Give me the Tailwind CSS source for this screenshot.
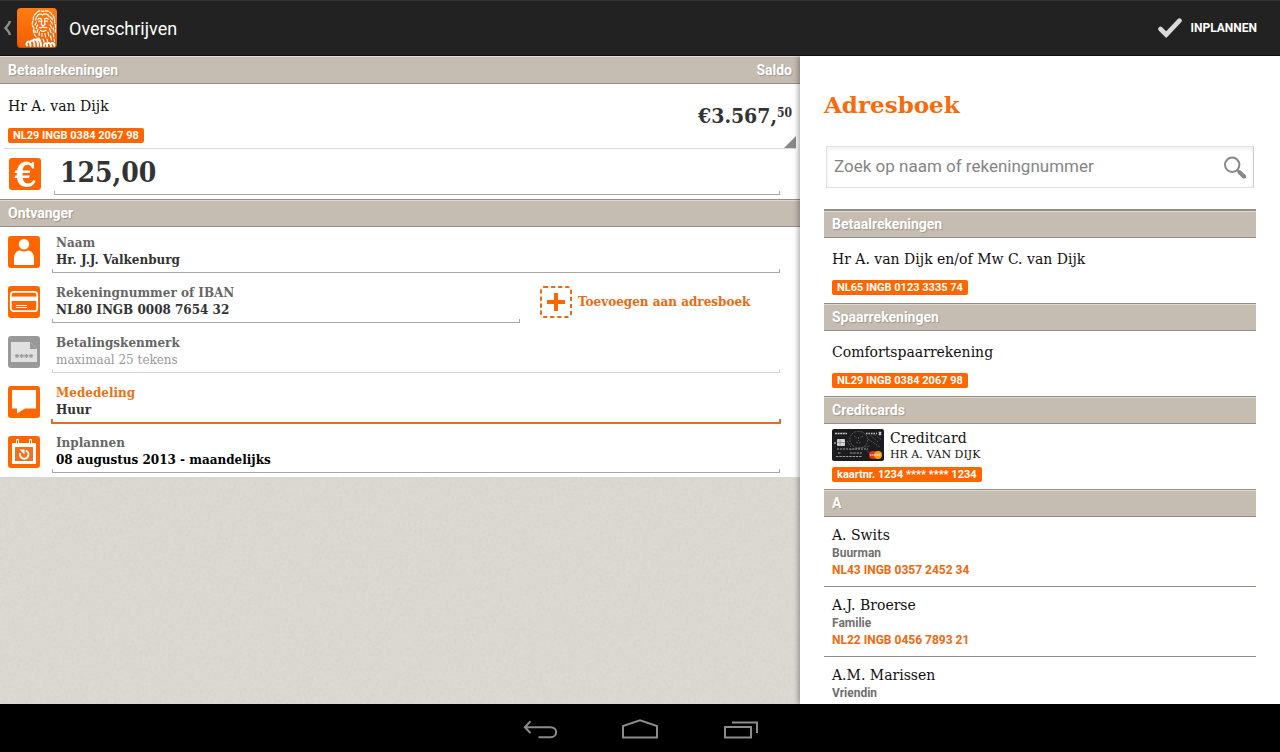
<!DOCTYPE html>
<html lang="nl">
<head>
<meta charset="utf-8">
<meta name="viewport" content="width=device-width, initial-scale=1">
<title>Overschrijven</title>
<script src="https://cdn.jsdelivr.net/npm/@tailwindcss/browser@4"></script>
</head>
<body class="flex h-screen flex-col overflow-hidden bg-black font-['Roboto',sans-serif] text-[#111]">

<!-- Action bar -->
<header class="flex h-14 shrink-0 items-center border-t border-b border-t-[#333] border-b-[#111] bg-[#222] pr-[23px] pl-1 text-white">
  <button type="button" aria-label="Terug" class="flex items-center gap-1">
    <svg class="h-4 w-[9px]" viewBox="0 0 9 16" fill="none" stroke="#8e8e8e" stroke-width="2.4"><path d="M6 1C5.500 4 3 6 1.500 8C3 10 5.500 12 6 15"/></svg>
    <svg class="size-10" viewBox="0 0 40 40" fill="none" stroke="#fff" stroke-linecap="round">
      <defs><linearGradient id="lg" x1="0" y1="0" x2="0" y2="1"><stop offset="0" stop-color="#ff7d12"/><stop offset="1" stop-color="#f25c00"/></linearGradient></defs>
      <rect width="40" height="40" rx="4" fill="url(#lg)" stroke="none"/>
      <g stroke-width="1.200">
        <path stroke-dasharray="3 1.600" d="M20 4.500C21 2.500 24 2.500 26 3.500C29 2 33 3 34.500 6C37 8 38 11 37.500 14C39 18 38.500 22 38 25"/>
        <path stroke-dasharray="3 1.600" d="M19.500 5C16.500 7 16 10 16.500 12C14.500 15 15 18 17 20C15.500 23 17 26 18.500 28L20 30"/>
        <path d="M20 8.500C21 5.500 24 5.500 25.500 7C27 5 31 5.500 32 8.500"/>
        <path d="M21 11.200C22 10 23.500 10 24.300 11.200M27.500 11.200C28.500 10 30.500 10 31.300 11.300"/>
        <path d="M21.800 13.200h1.600M28.600 13.200h1.600M24.800 12L24.300 16.500L26 18L28 16.500L27.400 12"/>
        <path d="M22.500 19.500C24 20.500 25 19 26 19C27 19 28.500 20.500 29.800 19.300M23.500 22.500C25 23.500 27.500 23.500 29 22.300"/>
        <path d="M19.500 9.500L18.500 12M19.500 14L18 17M20.500 17L19.200 20.500M21 21L20 24.500M22.500 24L22 27.500M25 25.500V28.500M28 25.500L28.500 29M31 24L31.800 28M32.500 20.500L34 24.500M33 17L35 20M33.500 13L35.600 16M33.200 9L35.500 11.500M17.800 22L18.200 24.500M36.300 20L36.500 22"/>
        <path d="M22 30L23.500 32.500M26 31L27 34M30 31L30.500 33.500M33.500 28L34.500 32M36 25L36.800 29M37.200 31L37.500 33.500"/>
      </g>
      <g stroke-width="2">
        <path d="M10 37.500C8.500 35 11 32.500 13 34L13.500 38M14 33C16 31.500 17.500 33.500 17.500 38M17 31.500C20 31 21 34 21 38M20.500 31C23 32 24 35 24 38"/>
        <path d="M27 38C26.500 35.500 28.500 34.500 30 36V38.500M31 35C33 34.500 34 36 34 38.500M35 35C37 35 37.500 36.500 37.500 38"/>
      </g>
      <path d="M.5 36.500C.5 38.500 2 39.700 4 39.700H36C38 39.700 39.500 38.500 39.500 36.500" stroke="#b84400" stroke-width=".8"/>
    </svg>
  </button>
  <h1 class="ml-3 flex-1 pt-px text-lg">Overschrijven</h1>
  <button type="button" class="flex items-center gap-2 text-xs font-bold">
    <svg class="h-5 w-6" viewBox="0 0 24 20" fill="none" stroke="#dadada" stroke-width="4.600" stroke-linecap="round" stroke-linejoin="miter"><path d="M2.500 11L8.200 16.600L21.500 2.600"/></svg>
    INPLANNEN
  </button>
</header>

<main class="flex min-h-0 flex-1 overflow-hidden bg-white">

  <!-- Transfer form -->
  <form class="flex w-5/8 flex-col bg-[#dcd8d2] font-['DejaVu_Serif',serif]">
    <div class="flex h-7 items-center justify-between border-t border-b border-t-[#e4dfd9] border-b-[#948f85] bg-[#c5bcb2] px-2 font-['Roboto',sans-serif] text-sm font-bold text-white text-shadow-[1px_1px_1px_#0003]">
      <h2>Betaalrekeningen</h2><span>Saldo</span>
    </div>
    <button type="button" class="flex h-[65px] justify-between bg-white pr-1 pl-1 text-left">
      <span class="flex h-full flex-1 flex-col items-start border-b border-[#d6d6d6] pt-3 pl-1">
        <span class="text-sm leading-5">Hr A. van Dijk</span>
        <span class="mt-3 rounded-xs bg-[#ff6600] px-[5px] font-['Roboto',sans-serif] text-[11px] leading-[15px] font-bold text-white">NL29 INGB 0384 2067 98</span>
      </span>
      <span class="flex h-full flex-col items-end justify-between border-b border-[#d6d6d6] pt-5 text-[#333]">
        <span class="flex items-start pr-1 font-['DejaVu_Serif_Condensed','DejaVu_Serif',serif] text-[21px] leading-6 font-bold">€3.567,<span class="text-xs leading-[18px]">50</span></span>
        <svg class="size-3" viewBox="0 0 12 12"><path d="M12 0V12H0Z" fill="#888"/></svg>
      </span>
    </button>
    <div class="flex h-[50px] bg-white pr-5 pl-[9px]">
      <svg class="mt-[9px] size-8 shrink-0" viewBox="0 0 32 32"><rect width="32" height="32" rx="3" fill="#f60"/><path d="M25 4V10.500H23C22.500 8 21 6.700 18.500 6.700C15.500 6.700 14 8.800 13.700 12.500H21.500L20.800 15H13.500V17.500H20.800L20 20H13.800C14.200 23.500 16 25.500 19 25.500C21.500 25.500 23.500 24.300 24.500 22L26.500 23C25 27 22 29 17.500 29C12 29 8.800 25.500 8 20H5.500L6.300 17.500H7.800V15H5.500L6.300 12.500H8.100C9 7 12.500 3.500 17.300 3.500C19.500 3.500 21 4.200 22.300 5.500L23.300 4Z" fill="#fff"/></svg>
      <div class="ml-[13px] flex flex-1 flex-col pt-2">
        <input aria-label="Bedrag" value="125,00" class="h-8 w-full bg-transparent px-[6px] font-['DejaVu_Serif_Condensed','DejaVu_Serif',serif] text-[28px] leading-8 font-bold text-[#333] outline-none">
        <div class="mt-[2px] h-1 border-x border-b border-[#a8a8a8]"></div>
      </div>
    </div>
    <h2 class="flex h-7 items-center border-t border-b border-[#948f85] bg-[#c5bcb2] px-2 font-['Roboto',sans-serif] text-sm font-bold text-white inset-shadow-[0_1px_0_#ddd8d1] text-shadow-[1px_1px_1px_#0003]">Ontvanger</h2>

    <div class="flex flex-col bg-white pr-5 pl-2 text-xs leading-[17px] font-bold text-[#333]">
      <div class="flex h-[50px]">
        <svg class="mt-[9px] size-8 shrink-0" viewBox="0 0 32 32"><rect width="32" height="32" rx="3" fill="#f60"/><circle cx="16" cy="8.200" r="5.200" fill="#fff"/><path d="M6 29V22.500C6 17.500 8.500 14.500 12 14.500C14.500 15.800 17.500 15.800 20 14.500C23.500 14.500 26 17.500 26 22.500V29Z" fill="#fff"/></svg>
        <div class="ml-3 flex flex-1 flex-col pt-2">
          <label for="naam" class="px-1 text-[#666]">Naam</label>
          <input id="naam" value="Hr. J.J. Valkenburg" class="h-[17px] bg-transparent px-1 outline-none">
          <div class="h-1 border-x border-b border-[#a8a8a8]"></div>
        </div>
      </div>
      <div class="flex h-[50px]">
        <svg class="mt-[9px] size-8 shrink-0" viewBox="0 0 32 32" fill="none" stroke="#fff"><rect width="32" height="32" rx="3" fill="#f60" stroke="none"/><rect x="2.800" y="5.800" width="26.400" height="19.400" rx="3" stroke-width="1.800"/><path d="M3 12.800H29" stroke-width="4.400"/><path d="M8 19.500H19M8 21.500H19" stroke-width="1"/></svg>
        <div class="ml-3 flex flex-1 flex-col pt-2">
          <label for="iban" class="px-1 text-[#666]">Rekeningnummer of IBAN</label>
          <input id="iban" value="NL80 INGB 0008 7654 32" class="h-[17px] bg-transparent px-1 outline-none">
          <div class="h-1 border-x border-b border-[#a8a8a8]"></div>
        </div>
        <button type="button" class="ml-5 flex w-60 items-start gap-[6px] pt-[9px] text-left leading-8 text-[#eb6a10]">
          <svg class="size-8 shrink-0" viewBox="0 0 32 32" fill="none" stroke="#eb6a10"><rect x="1" y="1" width="30" height="30" rx="3" stroke-width="2" stroke-dasharray="4.200 2.880"/><path d="M7 16H25M16 7V25" stroke="#f60" stroke-width="4"/></svg>
          Toevoegen aan adresboek
        </button>
      </div>
      <div class="flex h-[50px]">
        <svg class="mt-[9px] size-8 shrink-0" viewBox="0 0 32 32"><rect width="32" height="32" rx="3" fill="#999"/><path d="M3 6H22L29 13V26H3Z" fill="#e0e0e0"/><path d="M22 6V13H29Z" fill="#999"/><path d="M23 6H29V12Z" fill="#999"/><g stroke="#999" stroke-width="1.200"><path id="star" d="M9 18V22M7 19L11 21M11 19L7 21"/><use href="#star" x="4.700"/><use href="#star" x="9.400"/><use href="#star" x="14.100"/></g></svg>
        <div class="ml-3 flex flex-1 flex-col pt-2">
          <label for="kenmerk" class="px-1 text-[#666]">Betalingskenmerk</label>
          <input id="kenmerk" placeholder="maximaal 25 tekens" class="h-[17px] bg-transparent px-1 font-normal outline-none placeholder:text-[#999]">
          <div class="h-1 border-x border-b border-[#d4d4d4]"></div>
        </div>
      </div>
      <div class="flex h-[50px]">
        <svg class="mt-[9px] size-8 shrink-0" viewBox="0 0 32 32"><rect width="32" height="32" rx="3" fill="#f60"/><path d="M4 4H28V22.500H17L9 27.500V22.500H4Z" fill="#fff"/></svg>
        <div class="ml-3 flex flex-1 flex-col pt-2">
          <label for="mededeling" class="px-1 text-[#f07010]">Mededeling</label>
          <input id="mededeling" value="Huur" class="h-[17px] bg-transparent px-1 outline-none">
          <div class="-mx-px h-[5px] border-x-2 border-b-2 border-[#e3701e]"></div>
        </div>
      </div>
      <div class="flex h-[50px]">
        <svg class="mt-[9px] size-8 shrink-0" viewBox="0 0 32 32"><rect width="32" height="32" rx="3" fill="#f60"/><path d="M4 7H28V28H4Z" fill="#fff"/><rect x="7" y="11" width="18" height="14" fill="#f07020"/><path d="M8.500 3.500H10.500V8H8.500ZM21.500 3.500H23.500V8H21.500Z" fill="#f60" stroke="#fff"/><path d="M17.800 14.600A4.200 4.200 0 1 1 12.300 17" fill="none" stroke="#fff" stroke-width="2"/><path d="M11.500 13.500H16.500V18.500Z" fill="#fff"/></svg>
        <div class="ml-3 flex flex-1 flex-col pt-2">
          <label for="inplannen" class="px-1 text-[#666]">Inplannen</label>
          <input id="inplannen" value="08 augustus 2013 - maandelijks" class="h-[17px] bg-transparent px-1 text-black outline-none">
          <div class="h-1 border-x border-b border-[#a8a8a8]"></div>
        </div>
      </div>
    </div>
    <!-- Paper grain -->
    <div class="min-h-0 flex-1">
      <svg class="h-full w-full opacity-10" aria-hidden="true"><filter id="grain"><feTurbulence type="fractalNoise" baseFrequency=".35" numOctaves="2"/><feColorMatrix type="saturate" values="0"/></filter><rect width="100%" height="100%" filter="url(#grain)"/></svg>
    </div>
  </form>

  <!-- Address book -->
  <aside class="z-10 min-w-0 flex-1 overflow-hidden bg-white px-6 font-['DejaVu_Serif',serif] shadow-[-1px_0_6px_#0006]">
    <h2 class="pt-[33px] text-[23px] leading-8 font-bold text-[#f96a08]">Adresboek</h2>
    <div class="mx-[2px] mt-[25px] flex h-[42px] items-center border border-[#e2e2e2] border-r-[#ccc] pr-[6px] pl-[7px] font-['Roboto',sans-serif] inset-shadow-[0_2px_4px_#0001]">
      <input type="search" aria-label="Zoek op naam of rekeningnummer" placeholder="Zoek op naam of rekeningnummer" class="min-w-0 flex-1 bg-transparent text-[17px] outline-none placeholder:text-[#858585]">
      <button type="button" aria-label="Zoeken">
        <svg class="size-6" viewBox="0 0 24 24" fill="none" stroke="#888"><circle cx="9.200" cy="9.800" r="7.200" stroke-width="2"/><path d="M14.200 14.800L17 17.600" stroke-width="2.500"/><path d="M16.800 17.400L21 21.600" stroke-width="4.200" stroke-linecap="round"/></svg>
      </button>
    </div>

    <h3 class="mt-[21px] flex h-[29px] items-center border-t-2 border-b border-[#948f85] bg-[#c5bcb2] px-2 font-['Roboto',sans-serif] text-sm font-bold text-white inset-shadow-[0_1px_0_#ddd8d1] text-shadow-[1px_1px_1px_#0003]">Betaalrekeningen</h3>
    <div class="flex h-[65px] flex-col items-start px-2 pt-[11px]">
      <span class="text-sm leading-5">Hr A. van Dijk en/of Mw C. van Dijk</span>
      <span class="mt-[11px] rounded-xs bg-[#ff6600] px-[5px] font-['Roboto',sans-serif] text-[11px] leading-[15px] font-bold text-white">NL65 INGB 0123 3335 74</span>
    </div>
    <h3 class="flex h-7 items-center border-t border-b border-[#948f85] bg-[#c5bcb2] px-2 font-['Roboto',sans-serif] text-sm font-bold text-white inset-shadow-[0_1px_0_#ddd8d1] text-shadow-[1px_1px_1px_#0003]">Spaarrekeningen</h3>
    <div class="flex h-[65px] flex-col items-start px-2 pt-[11px]">
      <span class="text-sm leading-5">Comfortspaarrekening</span>
      <span class="mt-[11px] rounded-xs bg-[#ff6600] px-[5px] font-['Roboto',sans-serif] text-[11px] leading-[15px] font-bold text-white">NL29 INGB 0384 2067 98</span>
    </div>
    <h3 class="flex h-7 items-center border-t border-b border-[#948f85] bg-[#c5bcb2] px-2 font-['Roboto',sans-serif] text-sm font-bold text-white inset-shadow-[0_1px_0_#ddd8d1] text-shadow-[1px_1px_1px_#0003]">Creditcards</h3>
    <div class="flex h-[65px] flex-col items-start px-2 pt-[5px]">
      <div class="flex gap-[6px]">
        <svg class="h-8 w-[52px]" viewBox="0 0 52 32" fill="none"><rect width="52" height="32" rx="2" fill="#1c1c1e"/>
          <g stroke="#55565a" stroke-width="1"><path stroke-dasharray="2 1" d="M20 5C23 1.500 30 1.500 33 5C37 9 36 14 33 17C29 20 23 19 20 16C17 12 17 8 20 5M22 7L25 9M31 7L28 9M24 13Q26.500 15 29 13M26.500 8V12M18 21L38 17M38 6L46 13M36 10L48 18M40 4L50 11M34 20L38 25M15 12L19 18"/></g>
          <g stroke="#c9c9c9" stroke-width="1.400"><path d="M3 4.500H15" stroke-dasharray="2 .6"/><path d="M34 4.500H45" stroke-dasharray="1.500 1"/><path d="M47 3L49 6M49 3L47 6"/></g>
          <rect x="5" y="10" width="8" height="7" rx="1" fill="#d5d5d5"/><path d="M5 13.500H13M8 10V17" stroke="#888" stroke-width=".7"/><path d="M2 14H4" stroke="#eee"/>
          <g stroke="#9a9a9a" stroke-width="1.200"><path d="M5 20H36" stroke-dasharray="2 1"/><path d="M6 24H9M18 24H30M4 27.500H30" stroke-dasharray="2.500 .8"/></g>
          <circle cx="41" cy="26" r="4" fill="#e0341c"/><circle cx="46" cy="26" r="4" fill="#f59b20"/><path d="M38 26H49" stroke="#fff" stroke-width="1" stroke-dasharray="1.500 .6"/>
        </svg>
        <div class="flex flex-col">
          <span class="text-sm leading-[18px]">Creditcard</span>
          <span class="text-[11px] leading-4">HR A. VAN DIJK</span>
        </div>
      </div>
      <span class="mt-[4px] rounded-xs bg-[#ff6600] px-[5px] font-['Roboto',sans-serif] text-[11px] leading-[15px] font-bold text-white">kaartnr. 1234 **** **** 1234</span>
    </div>
    <h3 class="flex h-7 items-center border-t border-b border-[#948f85] bg-[#c5bcb2] px-2 font-['Roboto',sans-serif] text-sm font-bold text-white inset-shadow-[0_1px_0_#ddd8d1] text-shadow-[1px_1px_1px_#0003]">A</h3>
    <ul class="text-xs leading-[17px] font-bold">
      <li class="flex h-[70px] flex-col border-b border-[#948f85] px-2 pt-2">
        <span class="text-sm leading-5 font-normal">A. Swits</span>
        <span class="font-['Roboto',sans-serif] text-[#707070]">Buurman</span>
        <span class="font-['Roboto',sans-serif] text-[#ee6a10]">NL43 INGB 0357 2452 34</span>
      </li>
      <li class="flex h-[70px] flex-col border-b border-[#948f85] px-2 pt-2">
        <span class="text-sm leading-5 font-normal">A.J. Broerse</span>
        <span class="font-['Roboto',sans-serif] text-[#707070]">Familie</span>
        <span class="font-['Roboto',sans-serif] text-[#ee6a10]">NL22 INGB 0456 7893 21</span>
      </li>
      <li class="flex h-[70px] flex-col px-2 pt-2">
        <span class="text-sm leading-5 font-normal">A.M. Marissen</span>
        <span class="font-['Roboto',sans-serif] text-[#707070]">Vriendin</span>
      </li>
    </ul>
  </aside>
</main>

<!-- System navigation -->
<nav aria-label="Systeem" class="flex h-12 shrink-0 items-center justify-center gap-[60px] bg-black pt-[3px]">
  <button type="button" aria-label="Vorige"><svg class="h-6 w-10" viewBox="0 0 40 24" fill="none" stroke="#8c8c8c" stroke-width="2"><path d="M10.500 3.300L4.800 9.200L10.500 15M4.800 9.200H30.500C38 9.200 38 19.200 30.500 19.200H18.500"/></svg></button>
  <button type="button" aria-label="Startscherm"><svg class="h-6 w-10" viewBox="0 0 40 24" fill="none" stroke="#8c8c8c" stroke-width="2"><path d="M3 19.500V8L20 2.300L37 8V19.500Z"/></svg></button>
  <button type="button" aria-label="Recente apps"><svg class="h-6 w-10" viewBox="0 0 40 24" fill="none" stroke="#8c8c8c" stroke-width="2"><path d="M5 9H31V19.500H5ZM12 4.500H37V15"/></svg></button>
</nav>
</body>
</html>
